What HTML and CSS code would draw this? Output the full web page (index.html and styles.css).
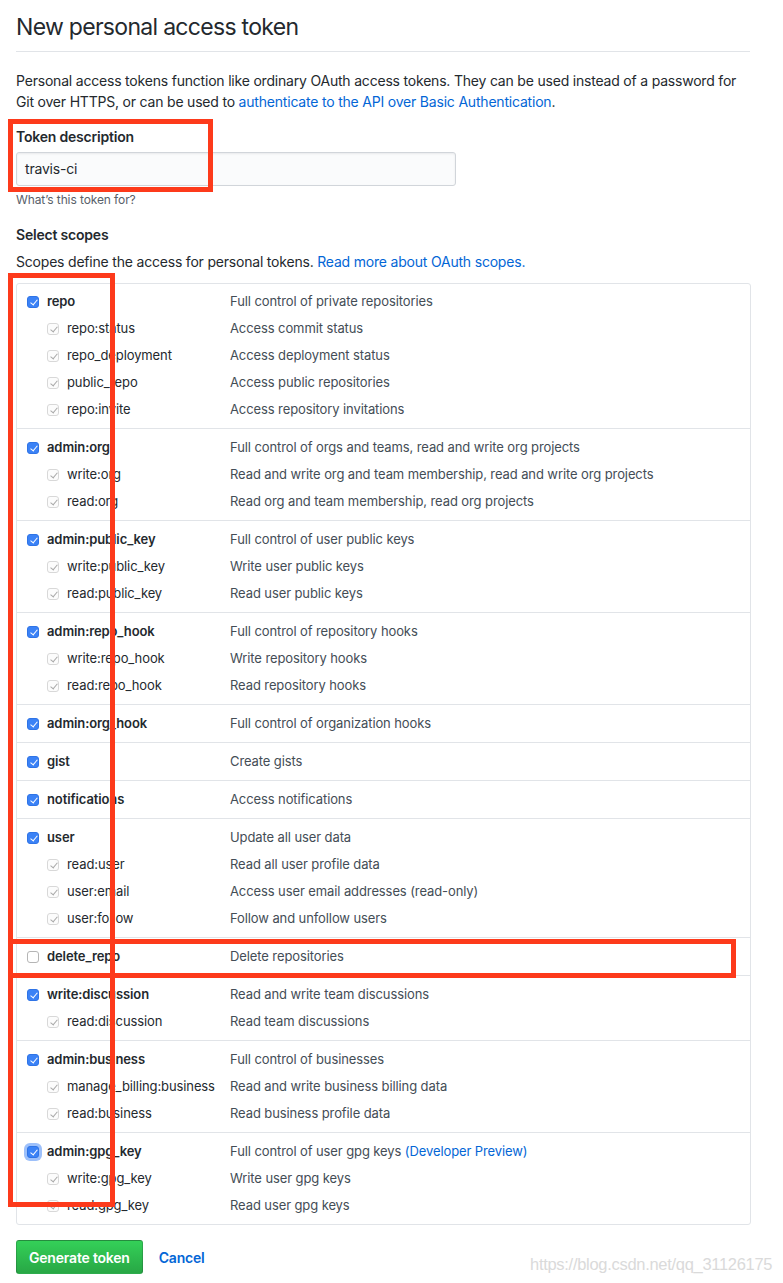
FILE: index.html
```html
<!DOCTYPE html>
<html>
<head>
<meta charset="utf-8">
<link rel="stylesheet" href="styles.css">
</head>
<body>
<div class="page">
  <h2 class="title">New personal access token</h2>
  <p class="intro">Personal access tokens function like ordinary OAuth access tokens. They can be used instead of a password for Git over HTTPS, or can be used to <a class="link" href="#">authenticate to the API over Basic Authentication</a>.</p>

  <div class="field">
    <label class="field-label">Token description</label>
    <div class="input">travis-ci</div>
    <p class="note">What’s this token for?</p>
  </div>

  <h3 class="field-label scopes-head">Select scopes</h3>
  <p class="scopes-desc">Scopes define the access for personal tokens. <a class="link" href="#">Read more about OAuth scopes.</a></p>

  <div class="scope-box">
    <div class="group">
      <div class="row"><span class="name"><span class="cb on"></span><b>repo</b></span><span class="desc">Full control of private repositories</span></div>
      <div class="row sub"><span class="name"><span class="cb dis"></span>repo:status</span><span class="desc">Access commit status</span></div>
      <div class="row sub"><span class="name"><span class="cb dis"></span>repo_deployment</span><span class="desc">Access deployment status</span></div>
      <div class="row sub"><span class="name"><span class="cb dis"></span>public_repo</span><span class="desc">Access public repositories</span></div>
      <div class="row sub"><span class="name"><span class="cb dis"></span>repo:invite</span><span class="desc">Access repository invitations</span></div>
    </div>
    <div class="group">
      <div class="row"><span class="name"><span class="cb on"></span><b>admin:org</b></span><span class="desc">Full control of orgs and teams, read and write org projects</span></div>
      <div class="row sub"><span class="name"><span class="cb dis"></span>write:org</span><span class="desc">Read and write org and team membership, read and write org projects</span></div>
      <div class="row sub"><span class="name"><span class="cb dis"></span>read:org</span><span class="desc">Read org and team membership, read org projects</span></div>
    </div>
    <div class="group">
      <div class="row"><span class="name"><span class="cb on"></span><b>admin:public_key</b></span><span class="desc">Full control of user public keys</span></div>
      <div class="row sub"><span class="name"><span class="cb dis"></span>write:public_key</span><span class="desc">Write user public keys</span></div>
      <div class="row sub"><span class="name"><span class="cb dis"></span>read:public_key</span><span class="desc">Read user public keys</span></div>
    </div>
    <div class="group">
      <div class="row"><span class="name"><span class="cb on"></span><b>admin:repo_hook</b></span><span class="desc">Full control of repository hooks</span></div>
      <div class="row sub"><span class="name"><span class="cb dis"></span>write:repo_hook</span><span class="desc">Write repository hooks</span></div>
      <div class="row sub"><span class="name"><span class="cb dis"></span>read:repo_hook</span><span class="desc">Read repository hooks</span></div>
    </div>
    <div class="group">
      <div class="row"><span class="name"><span class="cb on"></span><b>admin:org_hook</b></span><span class="desc">Full control of organization hooks</span></div>
    </div>
    <div class="group">
      <div class="row"><span class="name"><span class="cb on"></span><b>gist</b></span><span class="desc">Create gists</span></div>
    </div>
    <div class="group">
      <div class="row"><span class="name"><span class="cb on"></span><b>notifications</b></span><span class="desc">Access notifications</span></div>
    </div>
    <div class="group">
      <div class="row"><span class="name"><span class="cb on"></span><b>user</b></span><span class="desc">Update all user data</span></div>
      <div class="row sub"><span class="name"><span class="cb dis"></span>read:user</span><span class="desc">Read all user profile data</span></div>
      <div class="row sub"><span class="name"><span class="cb dis"></span>user:email</span><span class="desc">Access user email addresses (read-only)</span></div>
      <div class="row sub"><span class="name"><span class="cb dis"></span>user:follow</span><span class="desc">Follow and unfollow users</span></div>
    </div>
    <div class="group">
      <div class="row"><span class="name"><span class="cb"></span><b>delete_repo</b></span><span class="desc">Delete repositories</span></div>
    </div>
    <div class="group">
      <div class="row"><span class="name"><span class="cb on"></span><b>write:discussion</b></span><span class="desc">Read and write team discussions</span></div>
      <div class="row sub"><span class="name"><span class="cb dis"></span>read:discussion</span><span class="desc">Read team discussions</span></div>
    </div>
    <div class="group">
      <div class="row"><span class="name"><span class="cb on"></span><b>admin:business</b></span><span class="desc">Full control of businesses</span></div>
      <div class="row sub"><span class="name"><span class="cb dis"></span>manage_billing:business</span><span class="desc">Read and write business billing data</span></div>
      <div class="row sub"><span class="name"><span class="cb dis"></span>read:business</span><span class="desc">Read business profile data</span></div>
    </div>
    <div class="group">
      <div class="row"><span class="name"><span class="cb on focus"></span><b>admin:gpg_key</b></span><span class="desc">Full control of user gpg keys <a class="link" href="#">(Developer Preview)</a></span></div>
      <div class="row sub"><span class="name"><span class="cb dis"></span>write:gpg_key</span><span class="desc">Write user gpg keys</span></div>
      <div class="row sub"><span class="name"><span class="cb dis"></span>read:gpg_key</span><span class="desc">Read user gpg keys</span></div>
    </div>
  </div>

  <div class="actions">
    <button class="btn-primary">Generate token</button>
    <a class="cancel" href="#">Cancel</a>
  </div>

  <div class="mark mark-desc"></div>
  <div class="mark mark-scopes"></div>
  <div class="mark mark-delete"></div>
  <div class="watermark">https://blog.csdn.net/qq_31126175</div>
</div>
</body>
</html>
```

FILE: styles.css
```css
* { box-sizing: border-box; }
html, body { margin: 0; padding: 0; background: #fff; }
body {
  font-family: Inter, "Noto Sans", "Liberation Sans", sans-serif;
  font-size: 14px;
  line-height: 21px;
  letter-spacing: -0.2px;
  color: #24292e;
}
.page {
  position: relative;
  width: 783px;
  height: 1283px;
  padding: 12px 32px 0 16px;
}
.title {
  margin: 0 1px 0 0;
  padding-bottom: 9px;
  font-size: 23px;
  line-height: 30px;
  font-weight: 400;
  letter-spacing: -0.7px;
  border-bottom: 1px solid #e1e4e8;
}
.intro { margin: 18px 0 0; }
.link { color: #0366d6; text-decoration: none; }
.field { margin-top: 14px; }
.field-label {
  display: block;
  margin: 0;
  font-size: 14px;
  line-height: 21px;
  font-weight: 600;
}
.input {
  margin-top: 5px;
  width: 440px;
  height: 34px;
  padding: 0 8px;
  line-height: 32px;
  background: #fafbfc;
  border: 1px solid #d1d5da;
  border-radius: 3px;
  box-shadow: inset 0 1px 2px rgba(27,31,35,0.075);
}
.note {
  margin: 5px 0 0;
  font-size: 12px;
  line-height: 18px;
  letter-spacing: -0.1px;
  color: #586069;
}
.scopes-head { margin-top: 15px; }
.scopes-desc { margin: 6px 0 0; }
.scope-box {
  margin-top: 11px;
  border: 1px solid #e1e4e8;
  border-radius: 3px;
}
.group { padding: 5px 0; }
.group:first-child { padding-top: 4px; }
.group + .group { border-top: 1px solid #e1e4e8; }
.row {
  display: flex;
  align-items: center;
  height: 27px;
  padding-left: 10px;
  font-size: 13px;
  letter-spacing: -0.1px;
}
.row.sub { padding-left: 30px; }
.name {
  display: flex;
  align-items: center;
  gap: 8px;
  width: 203px;
  flex-shrink: 0;
  white-space: nowrap;
}
.row.sub .name { width: 183px; }
.name b { font-weight: 600; }
.desc { color: #444d56; }
.cb {
  position: relative;
  display: inline-block;
  width: 12px;
  height: 12px;
  border: 1px solid #b5b5b5;
  border-radius: 3px;
  background: #fff;
  flex-shrink: 0;
}
.cb.on { background: #3b82f6; border-color: #2f74e6; }
.cb.on::after, .cb.dis::after {
  content: "";
  position: absolute;
  left: 3.5px;
  top: 1.5px;
  width: 3px;
  height: 6px;
  border-right: 1.5px solid #fff;
  border-bottom: 1.5px solid #fff;
  transform: rotate(40deg);
}
.cb.dis { border-color: #d8d8d8; background: #fcfcfc; }
.cb.dis::after { border-color: #a8a8a8; border-width: 0 1.2px 1.2px 0; }
.cb.focus { box-shadow: 0 0 0 3px rgba(59,130,246,0.5); }
.actions {
  display: flex;
  align-items: center;
  gap: 16px;
  margin-top: 15px;
}
.btn-primary {
  height: 34px;
  padding: 0 12px;
  font-family: inherit;
  font-size: 14px;
  font-weight: 600;
  letter-spacing: -0.2px;
  color: #fff;
  background: linear-gradient(#34d058, #28a745);
  border: 1px solid rgba(27,31,35,0.2);
  border-radius: 3px;
}
.cancel {
  color: #0366d6;
  font-weight: 600;
  text-decoration: none;
}
.mark {
  position: absolute;
  border: 5px solid #fd3a1b;
}
.mark-desc { left: 8px; top: 119px; width: 205px; height: 73px; }
.mark-scopes { left: 8px; top: 273px; width: 107px; height: 934px; }
.mark-delete { left: 8px; top: 939px; width: 728px; height: 39px; }
.watermark {
  position: absolute;
  left: 530px;
  top: 1254px;
  font-family: "Liberation Sans", sans-serif;
  font-size: 17px;
  line-height: 22px;
  letter-spacing: -0.3px;
  color: #dadada;
  transform: scaleX(0.97);
  transform-origin: left;
  white-space: nowrap;
}
```
